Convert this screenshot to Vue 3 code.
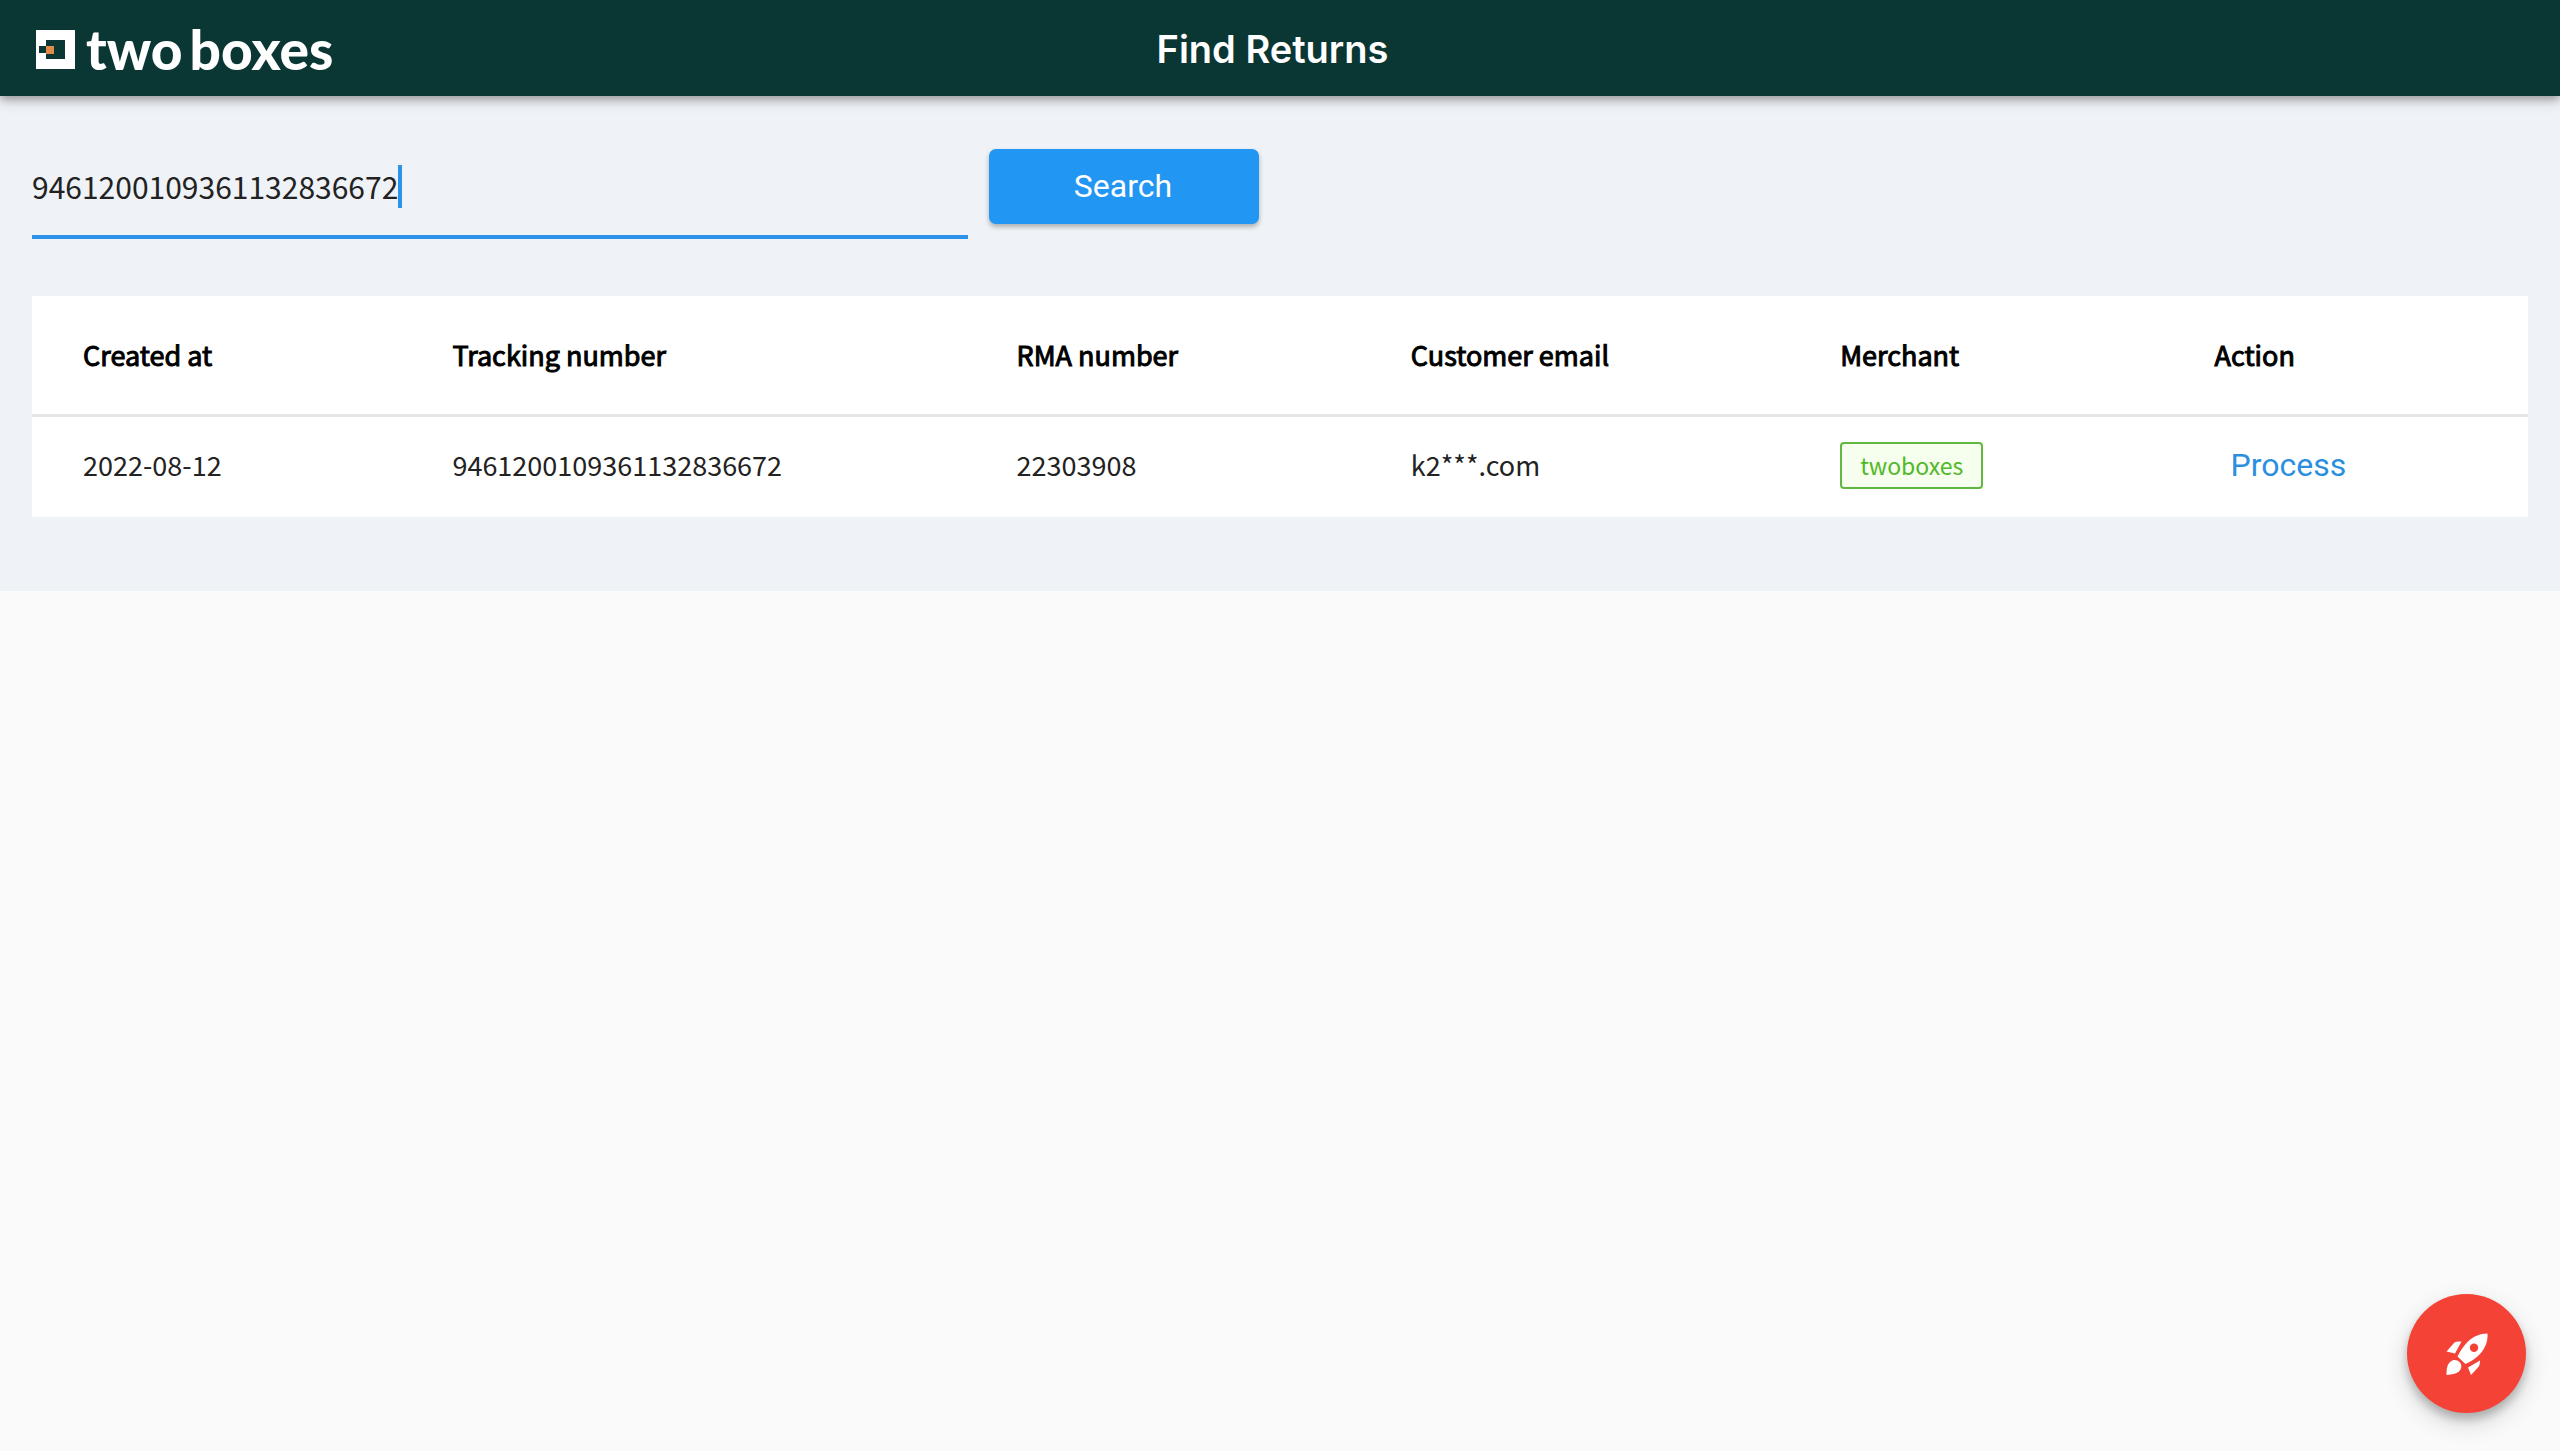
<script setup>
import { ref } from 'vue'

const query = ref('9461200109361132836672')

const columns = [
  { label: 'Created at', width: '14.8%' },
  { label: 'Tracking number', width: '22.6%' },
  { label: 'RMA number', width: '15.8%' },
  { label: 'Customer email', width: '17.2%' },
  { label: 'Merchant', width: '15%' },
  { label: 'Action', width: '14.6%' },
]

const returns = [
  {
    created: '2022-08-12',
    tracking: '9461200109361132836672',
    rma: '22303908',
    email: 'k2***.com',
    merchant: 'twoboxes',
  },
]
</script>

<template>
  <header class="bar">
    <a class="brand" href="#" aria-label="two boxes">
      <svg class="brand-mark" viewBox="0 0 39 39" aria-hidden="true">
        <path fill="#fff" fill-rule="evenodd" d="M0 0H39V39H0V23H10V29H29V10H10V16H0Z" />
        <path fill="#fff" d="M0 15H3V24H0Z" />
        <rect x="10" y="16" width="8" height="8" fill="#e08a4c" />
      </svg>
      <span class="brand-name"><span>two</span><span>boxes</span></span>
    </a>
    <h1 class="title">Find Returns</h1>
    <span class="bar-end"></span>
  </header>

  <main class="page">
    <form class="search" @submit.prevent>
      <label class="field">
        <input v-model="query" class="field-input" type="text" aria-label="Tracking number" />
        <span class="caret"></span>
      </label>
      <button class="search-button" type="submit">Search</button>
    </form>

    <table class="returns">
      <colgroup>
        <col v-for="c in columns" :key="c.label" :style="{ width: c.width }" />
      </colgroup>
      <thead>
        <tr>
          <th v-for="c in columns" :key="c.label" scope="col">{{ c.label }}</th>
        </tr>
      </thead>
      <tbody>
        <tr v-for="r in returns" :key="r.rma">
          <td>{{ r.created }}</td>
          <td>{{ r.tracking }}</td>
          <td>{{ r.rma }}</td>
          <td>{{ r.email }}</td>
          <td><span class="tag">{{ r.merchant }}</span></td>
          <td><button class="process" type="button">Process</button></td>
        </tr>
      </tbody>
    </table>
  </main>

  <button class="fab" type="button" aria-label="Quick actions">
    <svg viewBox="0 0 42 42" aria-hidden="true">
      <path fill="#fff" fill-rule="evenodd" d="M41.500 0.500C34 0.500 27 3.500 22 8.500C17 13.500 14 18.500 11.500 23.500L19.500 31C25 28.500 30 25.500 34 21C39.500 15 42 8 41.500 0.500ZM28 10.500A4.200 4.200 0 1 1 28 18.900A4.200 4.200 0 1 1 28 10.500Z" />
      <path fill="#fff" d="M0.500 18.500L8 10C9 8.800 11 8.500 15.500 8.500L9 20.500Z" />
      <path fill="#fff" d="M22 34.500L34 27.500C34 31 33.500 33 32 34.500L25 42Z" />
      <path fill="#fff" d="M0.500 42C0.500 36 1 32 4 29C7 26 11 26.500 13.500 29C16 31.500 16 35.500 13 38.500C10 41 6 41.500 0.500 42Z" />
    </svg>
  </button>
</template>

<style>
body {
  background: #fafafa;
}
</style>

<style scoped>
.bar {
  position: relative;
  display: grid;
  grid-template-columns: 1fr auto 1fr;
  align-items: center;
  height: 96px;
  padding: 2px 51px 0 36px;
  box-sizing: border-box;
  background: #0a3634;
  box-shadow: 0 3px 8px rgba(0, 0, 0, 0.3), 0 6px 14px rgba(0, 0, 0, 0.12);
}

.brand {
  display: flex;
  align-items: center;
  gap: 11px;
  color: #fff;
  text-decoration: none;
}

.brand-mark {
  width: 39px;
  height: 39px;
}

.brand-name {
  display: flex;
  gap: 7px;
  font: 900 55px/64px Lato, sans-serif;
}

.title {
  margin: 0;
  color: #fff;
  font: 600 38px/56px Inter, sans-serif;
}

.page {
  padding: 53px 32px 74px;
  background: #eff2f6;
  font-family: "Noto Sans CJK SC", sans-serif;
  color: #222;
}

.search {
  display: flex;
  align-items: flex-start;
  gap: 21px;
  margin-bottom: 57px;
}

.field {
  display: flex;
  align-items: center;
  width: 37.5%;
  height: 90px;
  padding-bottom: 12px;
  box-sizing: border-box;
  border-bottom: 4px solid #2b94ea;
}

.field-input {
  field-sizing: content;
  padding: 0;
  border: 0;
  outline: 0;
  background: none;
  color: #222;
  font: 400 30px/44px "Noto Sans CJK SC", sans-serif;
}

.caret {
  width: 4px;
  height: 43px;
  background: #2b94ea;
}

.search-button {
  width: 270px;
  height: 75px;
  padding: 0 2px 2px 0;
  border: 0;
  border-radius: 7px;
  background: #2196f3;
  box-shadow: 0 3px 5px rgba(0, 0, 0, 0.28);
  color: #fff;
  font: 400 32px/40px Roboto, sans-serif;
}

.returns {
  width: 100%;
  table-layout: fixed;
  border-collapse: separate;
  border-spacing: 0;
  background: #fff;
  font-size: 27px;
  line-height: 40px;
}

.returns th,
.returns td {
  box-sizing: border-box;
  padding: 0 0 0 51px;
  text-align: left;
  vertical-align: middle;
}

.returns th {
  height: 121px;
  border-bottom: 3px solid #e6e6e6;
  color: #000;
  font-weight: 400;
  -webkit-text-stroke: 1px #000;
}

.returns td {
  height: 100px;
  padding-bottom: 4px;
}

.tag {
  display: inline-block;
  padding: 0 18px;
  border: 2px solid #60b840;
  border-radius: 4px;
  background: #f6ffed;
  color: #52b82a;
  font-size: 23px;
  line-height: 43px;
  vertical-align: middle;
}

.process {
  padding: 0 16px;
  border: 0;
  background: none;
  color: #2b8fe0;
  font: 400 32px/40px Roboto, sans-serif;
}

.fab {
  position: fixed;
  right: 34px;
  bottom: 38px;
  display: grid;
  place-items: center;
  width: 119px;
  height: 119px;
  padding: 0;
  border: 0;
  border-radius: 50%;
  background: #f44336;
  box-shadow: 0 6px 10px rgba(0, 0, 0, 0.22), 0 10px 24px rgba(0, 0, 0, 0.16);
}

.fab svg {
  width: 42px;
  height: 42px;
}
</style>
